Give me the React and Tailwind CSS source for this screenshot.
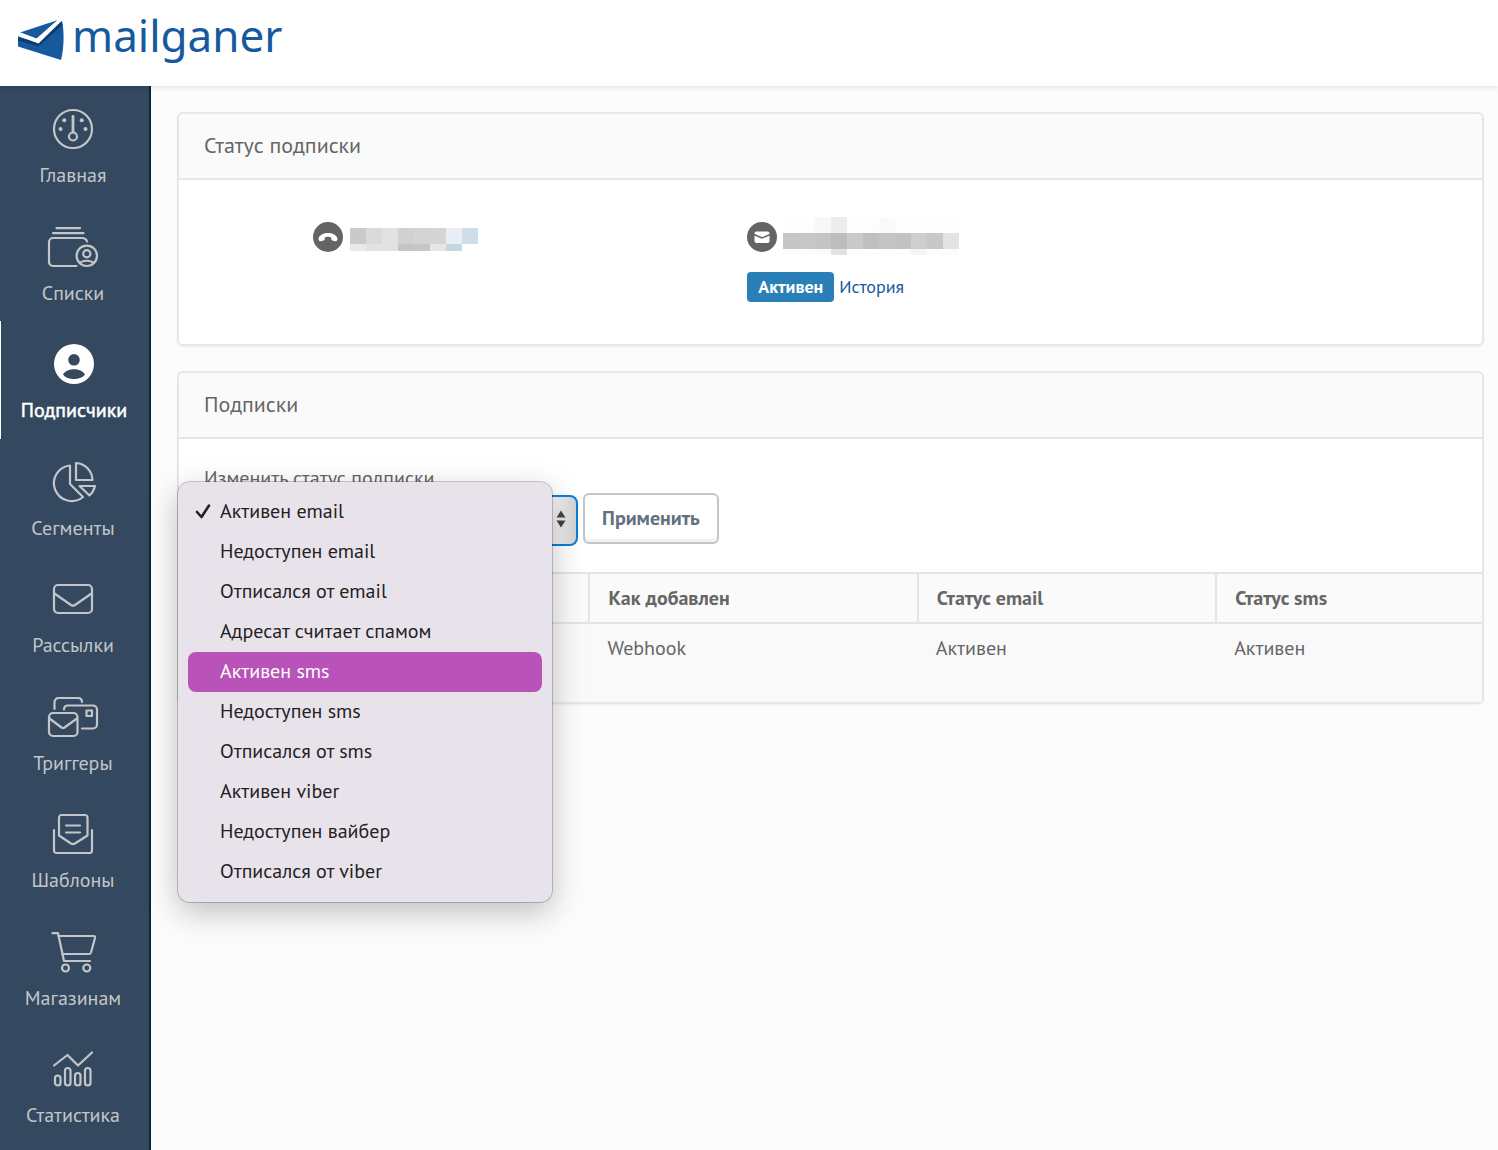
import React from "react";

const statuses = [
  "Активен email",
  "Недоступен email",
  "Отписался от email",
  "Адресат считает спамом",
  "Активен sms",
  "Недоступен sms",
  "Отписался от sms",
  "Активен viber",
  "Недоступен вайбер",
  "Отписался от viber",
];

function Icon({ children, wide }) {
  return (
    <svg
      viewBox={wide ? "0 0 50 40" : "0 0 40 40"}
      className={wide ? "h-10 w-[50px]" : "h-10 w-10"}
      fill="none"
      stroke="currentColor"
      strokeWidth="2.2"
      strokeLinecap="round"
      strokeLinejoin="round"
      overflow="visible"
      aria-hidden="true"
    >
      {children}
    </svg>
  );
}

const HomeIcon = () => (
  <Icon>
    <circle cx="20" cy="20" r="19" />
    <circle cx="20" cy="27.5" r="4" />
    <path d="M20 23V7.500" strokeWidth="2.800" />
    <g fill="currentColor" stroke="none">
      <circle cx="7.500" cy="20" r="2" />
      <circle cx="32.500" cy="20" r="2" />
      <circle cx="11.300" cy="11.300" r="2" />
      <circle cx="28.700" cy="11.300" r="2" />
    </g>
  </Icon>
);

const ListsIcon = () => (
  <Icon wide>
    <path d="M8.500 1.200H32M5 6.200H35.500" />
    <path d="M28.500 39H5A4 4 0 0 1 1 35V15A4 4 0 0 1 5 11H34C37 11 38.500 12.500 39 14.500" />
    <circle cx="38.800" cy="28.800" r="10.200" />
    <circle cx="38.800" cy="26.800" r="3.600" />
    <path d="M32 36C34.500 33 43 33 45.500 36" />
  </Icon>
);

const SubscribersIcon = () => (
  <Icon>
    <path
      fill="currentColor"
      stroke="none"
      fillRule="evenodd"
      d="M20 0A20 20 0 1 1 20 40A20 20 0 1 1 20 0ZM20 10A5.800 5.800 0 1 0 20 21.600A5.800 5.800 0 1 0 20 10ZM9 30.500C13 36.500 27 36.500 31 30.500C27 23.500 13 23.500 9 30.500Z"
    />
  </Icon>
);

const SegmentsIcon = () => (
  <Icon>
    <path d="M17 3.500V22L30 35A17.800 17.800 0 1 1 17 3.500Z" />
    <path d="M23 1V18H39.500A17.500 17.500 0 0 0 23 1Z" />
    <path d="M26.500 24H42A19 19 0 0 1 36.500 33.500Z" />
  </Icon>
);

const MailIcon = () => (
  <Icon>
    <rect x="1" y="6" width="38" height="28" rx="4" />
    <path d="M1.500 14.500L18 26Q20 27.300 22 26L38.500 14.500" />
  </Icon>
);

const TriggersIcon = () => (
  <Icon wide>
    <path d="M6.500 12V5A4 4 0 0 1 10.500 1H30C32.500 1 34 2.500 34 5" />
    <path d="M16 12.500C16 10 17.500 8.500 20 8.500H45A4 4 0 0 1 49 12.500V27.500A4 4 0 0 1 45 31.500H34" />
    <rect x="38.500" y="13.500" width="5.500" height="5.500" />
    <rect x="1" y="16" width="28.500" height="23" rx="4" />
    <path d="M1.500 21.500L13.500 30.500Q15 31.500 16.500 30.500L29 21.500" />
  </Icon>
);

const TemplatesIcon = () => (
  <Icon>
    <path d="M6 21.500V3.500A2.500 2.500 0 0 1 8.500 1H32A2.500 2.500 0 0 1 34.500 3.500V21.500L22 29.500Q20 30.600 18 29.500Z" />
    <path d="M13 11.500H27M13 18.500H27" />
    <path d="M1 16V36.500A2.500 2.500 0 0 0 3.500 39H36.500A2.500 2.500 0 0 0 39 36.500V16" />
  </Icon>
);

const ShopIcon = () => (
  <Icon>
    <path d="M-0.500 1.200H5L11 29H37" />
    <path d="M5.500 4H40.500Q42.500 4 42 6L38 20.500Q37.500 22 36 22H9.500" />
    <circle cx="12.500" cy="36" r="3.500" />
    <circle cx="33.800" cy="36" r="3.500" />
  </Icon>
);

const StatsIcon = () => (
  <Icon>
    <path d="M1 16.500L14.500 6L25 16.500L39 3.500" />
    <rect x="2" y="26.500" width="5.500" height="10" rx="2.750" />
    <rect x="12" y="19" width="5.500" height="17.500" rx="2.750" />
    <rect x="22" y="24" width="5.500" height="12.500" rx="2.750" />
    <rect x="32" y="19" width="5.500" height="17.500" rx="2.750" />
  </Icon>
);

const nav = [
  { label: "Главная", icon: HomeIcon },
  { label: "Списки", icon: ListsIcon },
  { label: "Подписчики", icon: SubscribersIcon, active: true },
  { label: "Сегменты", icon: SegmentsIcon },
  { label: "Рассылки", icon: MailIcon },
  { label: "Триггеры", icon: TriggersIcon },
  { label: "Шаблоны", icon: TemplatesIcon },
  { label: "Магазинам", icon: ShopIcon },
  { label: "Статистика", icon: StatsIcon },
];

function Header() {
  return (
    <header className="relative z-10 flex h-[86px] items-start bg-white pt-3 pl-[18px] shadow-[0_1px_6px_rgba(0,0,0,0.12)]">
      <a href="#" className="flex items-start gap-2 text-[#165a9d]">
        <svg viewBox="0 0 46 42" className="mt-[7px] h-[42px] w-[46px]" aria-hidden="true">
          <path fill="#165a9d" d="M0 17L0 27.500L43 41C46 30 46.500 12 44 2L20 24Z" />
          <path fill="#0a3c78" d="M0 19V21.500L20.500 27.500L44.500 6L43.500 2L20 22Z" />
          <path fill="#165a9d" d="M2 13.500L40 1L19 20Z" />
          <path fill="#fff" d="M0 17L2.500 13.500L18.500 19.500L39.500 1L43.500 2L20.500 24.500Z" />
        </svg>
        <span className="font-['Noto_Sans',sans-serif] text-[44px] leading-[46px]">mailganer</span>
      </a>
    </header>
  );
}

function Sidebar() {
  return (
    <nav className="w-[151px] shrink-0 border-r-2 border-[#0c2440] bg-[#34495f]">
      <ul>
        {nav.map(({ label, icon: Glyph, active }) => (
          <li key={label} className="odd:h-[118px] even:h-[117px]">
            <a
              href="#"
              aria-current={active ? "page" : undefined}
              className={
                active
                  ? "flex h-full flex-col items-center gap-3.5 border-l border-white pt-[23px] pr-0.5 text-[20px] leading-6 text-white [-webkit-text-stroke:0.5px]"
                  : "flex h-full flex-col items-center gap-3.5 pt-[23px] pr-[3px] text-[20px] leading-6 text-[#c3c6c9]"
              }
            >
              <Glyph />
              <span>{label}</span>
            </a>
          </li>
        ))}
      </ul>
    </nav>
  );
}

function Card({ title, children }) {
  return (
    <section className="rounded-md border-2 border-[#e4e8eb] bg-white shadow-[0_1px_2px_rgba(0,0,0,0.06)]">
      <h2 className="flex h-[66px] items-center rounded-t-md border-b-2 border-[#e4e8eb] bg-[#fafafa] px-[25px] pb-0.5 text-[22px] text-[#666]">
        {title}
      </h2>
      {children}
    </section>
  );
}

function Blurred({ rows }) {
  return (
    <div className="flex flex-col" aria-hidden="true">
      {rows.map((row, i) => (
        <div key={i} className={row.className}>
          {row.cells.map((c, j) => (
            <span key={j} className="w-4" style={{ backgroundColor: c }} />
          ))}
        </div>
      ))}
    </div>
  );
}

const phoneRows = [
  { className: "flex h-4", cells: ["#cacaca", "#dadada", "#e1e1e1", "#d1d1d1", "#d4d4d4", "#d5d5d5", "#e8eef3", "#cfdde9"] },
  { className: "flex h-[7px]", cells: ["#e9e9e9", "#e2e2e2", "#e1e1e1", "#c5c5c5", "#c7c7c7", "#e5e5e5", "#c3d6e3", "transparent"] },
];

const mailRows = [
  { className: "flex h-4", cells: ["#fdfdfd", "#fdfdfd", "#f8f8f8", "#ededed", "#fdfdfd", "#fdfdfd", "#fafafa", "#fdfdfd", "#fdfdfd", "#fdfdfd", "#fdfdfd"] },
  { className: "flex h-4", cells: ["#c6c6c6", "#c7c7c7", "#c4c4c4", "#bdbdbd", "#cacaca", "#bfbfbf", "#c3c5c5", "#c2c2c2", "#cecece", "#c8c8c8", "#e3e3e3"] },
  { className: "flex h-[6px]", cells: ["#fdfdfd", "#fdfdfd", "#fafafa", "#e3e3e3", "#fdfdfd", "#fdfdfd", "#fdfdfd", "#fdfdfd", "#f5f5f5", "#fdfdfd", "#fdfdfd"] },
];

function Contacts() {
  return (
    <div className="grid h-[164px] grid-cols-3">
      <div className="flex items-start gap-[7px] pt-[42px] pl-[134px]">
        <svg viewBox="0 0 30 30" className="size-[30px]" aria-label="Телефон">
          <circle cx="15" cy="15" r="15" fill="#646464" />
          <path
            fill="#fff"
            d="M5.500 16.500C7 9 23 9 24.500 16.500C24.500 18.500 23.500 19.500 22 19.300L19.500 18.500C18.300 18 18 17 18.200 15.300C16.500 14.600 13.500 14.600 11.800 15.300C12 17 11.700 18 10.500 18.500L8 19.300C6.500 19.500 5.500 18.500 5.500 16.500Z"
          />
        </svg>
        <div className="pt-1.5">
          <Blurred rows={phoneRows} />
        </div>
      </div>
      <div className="flex flex-col gap-[17px] pt-[37px] pl-[134px]">
        <div className="flex items-start gap-1.5">
          <svg viewBox="0 0 30 30" className="mt-[5px] size-[30px]" aria-label="Email">
            <circle cx="15" cy="15" r="15" fill="#646464" />
            <rect x="7.500" y="9.500" width="15" height="11.500" rx="2" fill="#fff" />
            <path d="M7 12.500L15 16L23 12.500" fill="none" stroke="#646464" strokeWidth="1.600" />
          </svg>
          <Blurred rows={mailRows} />
        </div>
        <div className="flex items-center gap-[5px] text-[18px]">
          <span className="flex h-[30px] w-[87px] items-center justify-center rounded bg-[#2980b9] pb-0.5 font-bold text-white">
            Активен
          </span>
          <a href="#" className="pb-0.5 text-[#165a9d]">
            История
          </a>
        </div>
      </div>
    </div>
  );
}

function StatusMenu() {
  return (
    <ul
      role="listbox"
      aria-label="Статус подписки"
      className="absolute -top-[13px] -left-[26px] w-[374px] rounded-xl bg-[#e8e3ea] p-2.5 shadow-[0_0_0_1px_rgba(0,0,0,0.2),0_10px_32px_rgba(0,0,0,0.25)]"
    >
      {statuses.map((s, i) => (
        <li
          key={s}
          role="option"
          aria-selected={i === 0}
          className={
            i === 4
              ? "flex h-10 items-center rounded-lg bg-[#b953b9] pb-0.5 pl-1.5 text-[20px] text-white"
              : "flex h-10 items-center rounded-lg pb-0.5 pl-1.5 text-[20px] text-[#232124]"
          }
        >
          <span className="w-[26px]">
            {i === 0 && (
              <svg viewBox="0 0 18 18" className="size-[18px]" aria-hidden="true">
                <path
                  d="M3 10L7.500 15L15 3.500"
                  fill="none"
                  stroke="currentColor"
                  strokeWidth="2.600"
                  strokeLinecap="round"
                  strokeLinejoin="round"
                />
              </svg>
            )}
          </span>
          {s}
        </li>
      ))}
    </ul>
  );
}

function StatusForm() {
  return (
    <form className="px-[25px] pt-6" onSubmit={(e) => e.preventDefault()}>
      <label htmlFor="status" className="block h-[30px] text-[20px] leading-[30px] text-[#666]">
        Изменить статус подписки
      </label>
      <div className="flex items-start gap-[5px]">
        <div className="relative mt-0.5 w-[374px]">
          <select
            id="status"
            defaultValue={statuses[0]}
            className="h-[51px] w-full appearance-none rounded-lg border-2 border-[#0a7fd9] bg-linear-to-r from-white from-90% via-[#ececec] via-96% to-[#d2d2d2] px-4 text-[20px] text-[#444]"
          >
            {statuses.map((s) => (
              <option key={s}>{s}</option>
            ))}
          </select>
          <svg viewBox="0 0 10 18" className="pointer-events-none absolute top-[15px] right-3 h-[18px] w-2.5" aria-hidden="true">
            <path d="M5 0.500L9.500 7.500H0.500ZM5 17.500L9.500 10.500H0.500Z" fill="#444" />
          </svg>
          <StatusMenu />
        </div>
        <button
          type="submit"
          className="h-[51px] w-[136px] rounded-md border-2 border-[#c1c6ca] bg-white pb-0.5 text-[20px] font-bold text-[#63707d] shadow-[inset_0_-3px_0_#f2f2f2]"
        >
          Применить
        </button>
      </div>
    </form>
  );
}

function SubscriptionTable() {
  return (
    <table className="mt-[26px] w-full table-fixed border-t-2 border-[#e1e5e9] text-left text-[20px] text-[#666]">
      <colgroup>
        <col className="w-[31.5%]" />
        <col className="w-[25.2%]" />
        <col className="w-[22.9%]" />
        <col className="w-[20.4%]" />
      </colgroup>
      <thead>
        <tr className="h-[50px] border-b-2 border-[#e1e5e9] bg-[#fafafa] leading-6">
          <th className="border-r-2 border-[#e1e5e9]" />
          <th className="border-r-2 border-[#e1e5e9] px-[18px] font-bold">Как добавлен</th>
          <th className="border-r-2 border-[#e1e5e9] px-[18px] font-bold">Статус email</th>
          <th className="px-[18px] font-bold">Статус sms</th>
        </tr>
      </thead>
      <tbody>
        <tr className="h-[79px] bg-[#f9f9f9] align-top leading-6">
          <td />
          <td className="px-[18px] pt-3">Webhook</td>
          <td className="px-[18px] pt-3">Активен</td>
          <td className="px-[18px] pt-3">Активен</td>
        </tr>
      </tbody>
    </table>
  );
}

export default function App() {
  return (
    <div className="flex min-h-screen flex-col bg-[#fcfcfc] font-['PT_Sans','Noto_Sans',sans-serif]">
      <Header />
      <div className="flex grow">
        <Sidebar />
        <main className="flex min-w-0 grow flex-col gap-[25px] pt-[26px] pr-3.5 pl-[26px]">
          <Card title="Статус подписки">
            <Contacts />
          </Card>
          <Card title="Подписки">
            <StatusForm />
            <SubscriptionTable />
          </Card>
        </main>
      </div>
    </div>
  );
}
